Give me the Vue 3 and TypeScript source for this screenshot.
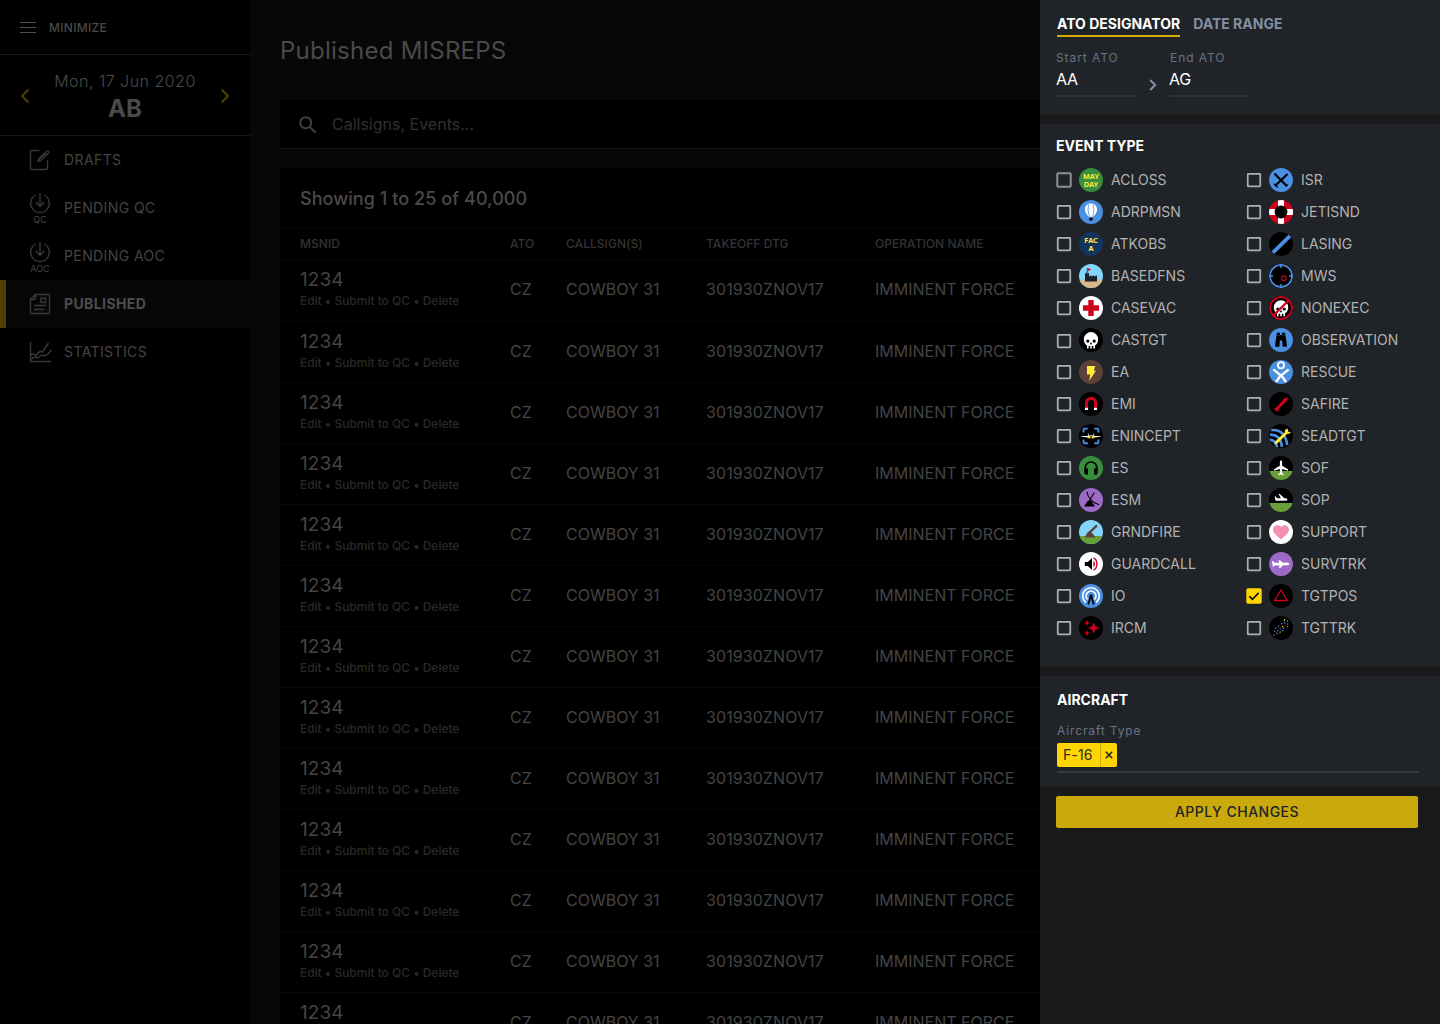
<script setup lang="ts">
interface EventType {
  name: string
  art: string
  bg: string
  checked?: boolean
  kind?: string
}

const skull =
  'M12,2A9,9 0 0,0 3,11C3,14.03 4.53,16.82 7,18.47V22H9V19H11V22H13V19H15V22H17V18.46C19.47,16.81 21,14 21,11A9,9 0 0,0 12,2M8,11A2,2 0 0,1 10,13A2,2 0 0,1 8,15A2,2 0 0,1 6,13A2,2 0 0,1 8,11M16,11A2,2 0 0,1 18,13A2,2 0 0,1 16,15A2,2 0 0,1 14,13A2,2 0 0,1 16,11M12,14L13.5,17H10.5L12,14Z'
const plane =
  'M21,16V14L13,9V3.5A1.5,1.5 0 0,0 11.5,2A1.5,1.5 0 0,0 10,3.5V9L2,14V16L10,13.5V19L8,20.5V22L11.5,21L15,22V20.5L13,19V13.5L21,16Z'
const heart =
  'M12,21.35L10.55,20.03C5.4,15.36 2,12.27 2,8.5C2,5.41 4.42,3 7.5,3C9.24,3 10.91,3.81 12,5.08C13.09,3.81 14.76,3 16.5,3C19.58,3 22,5.41 22,8.5C22,12.27 18.6,15.36 13.45,20.03L12,21.35Z'

const blue = '#4a90e2'
const label = 'font-family="Noto Sans, sans-serif" font-weight="700" font-size="7.3" fill="#ffeb3b" text-anchor="middle"'

const left: EventType[] = [
  { name: 'ACLOSS', bg: '#388e3c', kind: 'large', art: `<text x="12" y="11.100" ${label}>MAY</text><text x="12" y="19" ${label}>DAY</text>` },
  { name: 'ADRPMSN', bg: blue, art: `<path d="M12 3.500c-3.800 0-6.100 2.700-6.100 6 0 3 2 5.200 4 7.200h4.200c2-2 4-4.200 4-7.200 0-3.300-2.300-6-6.100-6z" fill="#fff"/><path d="M10 4.200C8.600 8 9 12.500 10.500 16.500M14 4.200c1.400 3.800 1 8.300-.5 12.300" fill="none" stroke="${blue}" stroke-width=".8"/><path d="M10.200 17.800h3.600v2.200l-.8.8h-2l-.8-.8z" fill="#111"/>` },
  { name: 'ATKOBS', bg: '#12345f', art: `<text x="12" y="11.200" ${label}>FAC</text><text x="12" y="19" ${label}>A</text>` },
  { name: 'BASEDFNS', bg: '#81d4fa', art: `<path d="M0 15.500h24V24H0z" fill="#d7b98a"/><path d="M6 17.500V9l1 .7V8.700h1v1l2-1v3.500h1.300v-.7h1.200v.7h1.400v-.7h1.200v.7h1.400v-.7H18v6z" fill="#1c2126"/><path d="M8.300 9V4" stroke="#1c2126" stroke-width=".8"/><path d="M8.700 4l3.300 1.600-3.300 1.700z" fill="#d0021b"/>` },
  { name: 'CASEVAC', bg: '#fff', art: '<path d="M9.300 4h5.400v5.300H20v5.400h-5.300V20H9.300v-5.300H4V9.300h5.300z" fill="#d0021b"/>' },
  { name: 'CASTGT', bg: '#000', kind: 'low', art: `<path transform="translate(2.400 2.400) scale(.8 .82)" d="${skull}" fill="#fff" fill-rule="evenodd"/>` },
  { name: 'EA', bg: '#5d4037', art: '<path d="M8 6h8.300l-1.500 4.800H17L10.300 20.800l.9-6.300H8z" fill="#ffeb3b"/>' },
  { name: 'EMI', bg: '#000', art: '<path d="M7.500 15.700v-4.900a4.500 4.500 0 0 1 9 0v4.900" fill="none" stroke="#d0021b" stroke-width="3.100"/><path d="M5.950 15.700h3.100V18h-3.100zM14.950 15.700h3.100V18h-3.100z" fill="#fff"/>' },
  { name: 'ENINCEPT', bg: '#000', art: `<path d="M8.800 4.600H5.600q-1 0-1 1v3M15.200 4.600h3.200q1 0 1 1v3M4.600 15.400v2.800q0 1 1 1h3.200M19.400 15.400v2.800q0 1-1 1h-3.200" fill="none" stroke="${blue}" stroke-width="1.900"/><path d="M2.200 12.200l7.300-.5h5l7.300.5v.6l-7.300.7h-5l-7.300-.7zM9 8.500l1 3.500H8.800zM15 8.500l.2 3.500H14z" fill="#fff"/><path d="M10.600 11.200h2.800v3h-2.800z" fill="#ddd"/><path d="M8.500 12.300h2.200v2H8.500zM13.300 12.300h2.200v2h-2.200z" fill="#ffd600"/><path d="M11.300 12h1.400v1.800h-1.400z" fill="#111"/>` },
  { name: 'ES', bg: '#388e3c', art: '<path d="M6.200 15v-3.200a5.800 5.800 0 0 1 11.600 0V15" fill="none" stroke="#000" stroke-width="1.700"/><path d="M5.400 13q0-.8.8-.8h2.700v6.600h-1.700q-1.800 0-1.800-1.800zM18.600 13q0-.8-.8-.8h-2.700v6.600h1.700q1.800 0 1.800-1.800z" fill="#000"/>' },
  { name: 'ESM', bg: '#9b6bc7', art: '<path d="M5 18.500L8.600 13l3.400-.5 4 6z" fill="#000"/><path d="M8 3.700c.6 5.800 5.300 11 12 13.100M15.300 4.500l-5.500 9.200" fill="none" stroke="#000" stroke-width="1.100"/>' },
  { name: 'GRNDFIRE', bg: '#81d4fa', art: '<path d="M0 16h24v8H0z" fill="#689f38"/><path d="M5.500 17.500l3-5 2.500-1.600L14 14l2.500 3.500z" fill="#5d4037"/><path d="M10 13l8-7.700" stroke="#5d4037" stroke-width="2.300"/>' },
  { name: 'GUARDCALL', bg: '#fff', art: '<path d="M5.800 10h3L13 6v12l-4.200-4h-3z" fill="#000"/><path d="M14.400 8.400v7.200q1.600-1.200 1.600-3.600t-1.600-3.600z" fill="#d0021b"/><path d="M14.500 6.200c4.500 1.300 4.500 10.300 0 11.600" fill="none" stroke="#d0021b" stroke-width="1.400"/>' },
  { name: 'IO', bg: blue, art: '<path d="M6.800 18.500a8.300 8.300 0 1 1 10.400 0M8.500 15.500a4.900 4.900 0 1 1 7 0" fill="none" stroke="#fff" stroke-width="1.700"/><circle cx="12" cy="11.800" r="1.600" fill="#000"/><path d="M11.600 12.500L9.200 20.500M12.400 12.500l2.400 8" stroke="#000" stroke-width="1.800"/>' },
  { name: 'IRCM', bg: '#000', art: '<path d="M14.700 6.600l1.600 3.800 3.900 1.600-3.900 1.600-1.600 3.900-1.600-3.900L9.200 12l3.900-1.600zM8 4.200l.8 1.900 1.900.8-1.900.8L8 9.600l-.8-1.900-1.900-.8 1.900-.8zM8 14.400l.8 1.900 1.900.8-1.900.8-.8 1.900-.8-1.900-1.900-.8 1.900-.8z" fill="#d0021b" stroke="#d0021b" stroke-width=".3"/>' },
]

const right: EventType[] = [
  { name: 'ISR', bg: blue, art: '<path d="M6 18L18.500 6M6.300 6.500L18 18.200" stroke="#000" stroke-width="2.100"/><path d="M4.800 15.600l3.900 3.900M5 6.500l2-1.200M17.300 18.500l1.300-2" stroke="#000" stroke-width="1.200"/>' },
  { name: 'JETISND', bg: '#d0021b', art: '<path d="M9 0h6v24H9zM0 9h24v6H0z" fill="#fff"/><circle cx="12" cy="12" r="6.400" fill="#000"/>' },
  { name: 'LASING', bg: '#000', art: `<path d="M3.600 20.800L21.300 3.600" stroke="${blue}" stroke-width="3.800"/>` },
  { name: 'MWS', bg: '#000', art: `<circle cx="12" cy="12" r="11.100" fill="none" stroke="${blue}" stroke-width="1.800"/><path d="M12 0v4M12 20v4M0 12h4M20 12h4" stroke="${blue}" stroke-width="1.500"/><circle cx="14.800" cy="14.200" r="2.300" fill="none" stroke="#d0021b" stroke-width="1.200"/>` },
  { name: 'NONEXEC', bg: '#000', art: `<path transform="translate(2.400 2.600) scale(.8)" d="${skull}" fill="#fff" fill-rule="evenodd"/><circle cx="12" cy="12" r="11" fill="none" stroke="#d0021b" stroke-width="2"/><path d="M4.300 19.700L19.700 4.300" stroke="#d0021b" stroke-width="2.300"/>` },
  { name: 'OBSERVATION', bg: blue, art: '<path d="M8 4.800h3V7h2V4.800h3l.5 2.400 1.300 9.300v2.300h-4.200l-.4-6.300h-2.400l-.4 6.300H6.200v-2.300l1.300-9.300z" fill="#000"/><path d="M7.600 7.300h3.400M13 7.300h3.400" stroke="#4a90e2" stroke-width=".35"/>' },
  { name: 'RESCUE', bg: blue, art: '<circle cx="12" cy="5.200" r="3.100" fill="none" stroke="#fff" stroke-width="1.800"/><path d="M4.300 9.300L12 15.600l7.700-6.300M12 15L7 22M12 15l5 7" fill="none" stroke="#fff" stroke-width="2.300"/>' },
  { name: 'SAFIRE', bg: '#000', art: '<path d="M18.800 5.200q.2 3-1.400 4.600l-1.300.6-6.500 6.500-.1 2.600-1.300-.8-.7.900-.5-1.300-1.300.2.300-1.300-1.300-.4 3-1.900 5.900-6.100.4-1.500q1.700-1.800 4.800-2.100z" fill="#d0021b"/>' },
  { name: 'SEADTGT', bg: '#000', art: `<path d="M2.300 6.100Q16 5 18.200 21M.8 10.800Q11.500 10 13 23M0 15.800q7 0 8 7.500" fill="none" stroke="${blue}" stroke-width="2.600"/><path d="M18.700 4.800l-2.400.9-.4 2.900-9.800 9-.5 2.600 2.900-1 9.300-9.300 2.600-.3 1.500-1.700-2.800.2z" fill="#ffeb3b" stroke="#ffeb3b" stroke-width=".3"/>` },
  { name: 'SOF', bg: '#000', art: `<path d="M0 15h24v9H0z" fill="#689f38"/><path transform="translate(3.500 3) scale(.74)" d="${plane}" fill="#fff"/>` },
  { name: 'SOP', bg: '#000', art: '<path d="M0 15h24v9H0z" fill="#689f38"/><path d="M5.600 8.600h1l1.600 1.700h3.700L9.600 6h1.200l4.500 4.300h1.800q1.300.2 1.300 1.300t-1.300 1.200H7.600q-.9 0-1.200-.9z" fill="#fff"/>' },
  { name: 'SUPPORT', bg: '#fff', art: `<path transform="translate(2.400 3) scale(.8 .77)" d="${heart}" fill="#f48fb1"/>` },
  { name: 'SURVTRK', bg: '#9b6bc7', art: '<path d="M3 9h1.100l1.300 1.700h4.900L9.500 8.200h1.400l3 2.500 4.700-.1q1.500.4 1.700 1.300-.3 1.100-2 1.300h-4.200L11.300 16H9.900l.8-2.600-5.300.1-1.600 1.800-.3-3.300z" fill="#fff"/>' },
  { name: 'TGTPOS', bg: '#000', checked: true, art: '<path d="M12 6l6.300 10.500H5.700z" fill="none" stroke="#d0021b" stroke-width="1.300"/>' },
  { name: 'TGTTRK', bg: '#000', art: `<path d="M14.500 4h1.200v1.200h-1.200zM18 4.500h1.200v1.200H18zM12 7h1.200v1.200H12zM15 6.500h1.200v1.200H15zM9 9.500h1.200v1.200H9zM6 11.500h1.200v1.200H6zM10.500 12h1.200v1.200h-1.200zM14 11.500h1.200v1.200H14zM18 10h1.200v1.200H18zM5 14.500h1.200v1.200H5zM8 14h1.200v1.200H8zM13 14h1.200v1.200H13zM4.500 18.500h1.200v1.200H4.500zM18 7.500h1.200v1.200H18zM7 16.500h1.200v1.200H7z" fill="${blue}"/><path d="M15 3h1.200v1.200H15zM13 10h1.200v1.200H13zM10.500 15.500h1.200v1.200h-1.200z" fill="#ffd600"/><path d="M16 8.500h1.200v1.200H16zM8.500 17.500h1.200v1.200H8.500z" fill="#d0021b"/>` },
]

const columns = [left, right]
const nav = [
  { icon: 'drafts', text: 'DRAFTS' },
  { icon: 'pending', text: 'PENDING QC', tag: 'QC' },
  { icon: 'pending', text: 'PENDING AOC', tag: 'AOC' },
  { icon: 'published', text: 'PUBLISHED', active: true },
  { icon: 'statistics', text: 'STATISTICS' },
]
const rows = Array.from({ length: 13 }, () => ({
  id: '1234',
  ato: 'CZ',
  callsign: 'COWBOY 31',
  dtg: '301930ZNOV17',
  operation: 'IMMINENT FORCE',
}))
</script>

<template>
  <div class="app">
    <aside class="sidebar">
      <div class="minimize">
        <svg width="16" height="12" viewBox="0 0 16 12"><path d="M0 .5h16M0 5.500h16M0 10.500h16" stroke="#4d4d4d" /></svg>
        <span>MINIMIZE</span>
      </div>
      <div class="day">
        <svg width="10" height="16" viewBox="0 0 10 16"><path d="M8.500 1.500L2 8l6.500 6.500" /></svg>
        <div class="day-text">
          <div class="date">Mon, 17 Jun 2020</div>
          <div class="code">AB</div>
        </div>
        <svg width="10" height="16" viewBox="0 0 10 16"><path d="M1.500 1.500L8 8l-6.500 6.500" /></svg>
      </div>
      <nav>
        <div v-for="item in nav" :key="item.text" class="nav-item" :class="{ active: item.active }">
          <div class="nav-icon" :class="item.tag">
            <svg v-if="item.icon === 'drafts'" width="22" height="22" viewBox="0 0 22 22">
              <path d="M10.500 1.500h-8q-1 0-1 1v17q0 1 1 1h15q1 0 1-1V11M9 12.500l.7-2.700 7.800-7.600q1-.7 1.800 0t.1 1.800l-7.700 7.700zM9.500 11l7.500-7" />
            </svg>
            <svg v-else-if="item.icon === 'pending'" class="pending" width="22" height="22" viewBox="0 0 22 22">
              <path d="M6.700 3A9.300 9.300 0 1 0 15.300 3M11 1v13M6.800 10l4.200 4.200 4.200-4.200" />
            </svg>
            <svg v-else-if="item.icon === 'published'" width="22" height="22" viewBox="0 0 22 22">
              <path d="M1.500 6.500l5-5h13q1 0 1 1v17q0 1-1 1h-17q-1 0-1-1zM1.500 6.500h4q1 0 1-1v-4M12 5.200h4.500v4.300H12zM5 12.500h12M5 16.500h10" />
            </svg>
            <svg v-else width="22" height="22" viewBox="0 0 22 22">
              <path d="M1.500 1v19.500H22M2 13.500l2.500-.5 2.500 1.500 3.500-4 3 .5L19.500 2M2 18l4-2 2.500 1 4-3 2.500 1 3.500-1.500 4-4.500" />
            </svg>
            <span v-if="item.tag" class="tag">{{ item.tag }}</span>
          </div>
          <span class="nav-text">{{ item.text }}</span>
        </div>
      </nav>
    </aside>

    <main class="main">
      <h1>Published MISREPS</h1>
      <div class="search">
        <svg width="18" height="18" viewBox="0 0 18 18"><circle cx="6.700" cy="6.700" r="5.500" /><path d="M10.700 10.700l6 6" /></svg>
        <span>Callsigns, Events...</span>
      </div>
      <section class="table">
        <div class="showing">Showing 1 to 25 of 40,000</div>
        <div class="row head">
          <span>MSNID</span><span>ATO</span><span>CALLSIGN(S)</span><span>TAKEOFF DTG</span><span>OPERATION NAME</span>
        </div>
        <div v-for="(r, i) in rows" :key="i" class="row body">
          <div>
            <div class="id">{{ r.id }}</div>
            <div class="links">Edit • Submit to QC • Delete</div>
          </div>
          <span>{{ r.ato }}</span><span>{{ r.callsign }}</span><span class="dtg">{{ r.dtg }}</span><span>{{ r.operation }}</span>
        </div>
      </section>
    </main>

    <aside class="panel">
      <section class="ato">
        <div class="tabs"><span class="on">ATO DESIGNATOR</span><span>DATE RANGE</span></div>
        <div class="range">
          <div class="field"><label>Start ATO</label><div class="value">AA</div></div>
          <svg width="8" height="12" viewBox="0 0 8 12"><path d="M1.200 1l5 5-5 5" fill="none" stroke="#8290a2" stroke-width="2" /></svg>
          <div class="field end"><label>End ATO</label><div class="value">AG</div></div>
        </div>
      </section>
      <section class="events">
        <h2>EVENT TYPE</h2>
        <div class="columns">
          <div v-for="(list, c) in columns" :key="c" class="column">
            <div v-for="e in list" :key="e.name" class="event">
              <svg class="check" :class="e.kind" width="16" height="16" viewBox="0 0 16 16">
                <template v-if="e.checked">
                  <rect x=".3" y=".3" width="15.400" height="15.400" rx="1.800" fill="#ffd600" />
                  <path d="M3.300 8.200l3.100 3.100 6.300-6.400" fill="none" stroke="#111" stroke-width="1.700" />
                </template>
                <rect v-else-if="e.kind === 'large'" x="1.300" y="1.300" width="13.400" height="13.400" rx=".8" fill="none" stroke="#8f8f8f" stroke-width="2" />
                <rect v-else x="1.750" y="1.750" width="12.500" height="12.500" rx=".6" fill="none" stroke="#a9b0ba" stroke-width="1.750" />
              </svg>
              <svg class="badge" width="24" height="24" viewBox="0 0 24 24" :style="{ background: e.bg }" v-html="e.art" />
              <span class="name">{{ e.name }}</span>
            </div>
          </div>
        </div>
      </section>
      <section class="aircraft">
        <h2>AIRCRAFT</h2>
        <label>Aircraft Type</label>
        <div class="chips">
          <div class="chip">
            <span>F-16</span>
            <i><svg width="8" height="8" viewBox="0 0 8 8"><path d="M.8.8l6.400 6.400M7.200.8L.8 7.200" stroke="#1f2228" stroke-width="1.500" /></svg></i>
          </div>
        </div>
      </section>
      <button>APPLY CHANGES</button>
    </aside>
  </div>
</template>

<style>
body { background: #000; }
</style>

<style scoped>
* { box-sizing: border-box; }
.app {
  display: flex;
  width: 1440px;
  height: 1024px;
  overflow: hidden;
  background: #070707;
  color: #4a4a4a;
  font-family: Inter, "Liberation Sans", sans-serif;
}
svg { display: block; flex: none; }
h1, h2 { margin: 0; }
.sidebar { width: 250px; flex: none; background: #000; }
.minimize {
  display: flex;
  align-items: center;
  gap: 13px;
  height: 55px;
  padding-left: 20px;
  border-bottom: 1px solid #1a1a1a;
  font-size: 12px;
  font-weight: 500;
  letter-spacing: .3px;
}
.minimize svg { margin-top: 2px; }
.day {
  display: flex;
  align-items: center;
  justify-content: space-between;
  height: 81px;
  padding: 0 20px;
  border-bottom: 1px solid #1a1a1a;
}
.day svg { margin-top: 1px; fill: none; stroke: #4d4000; stroke-width: 2; }
.day-text { padding-top: 3px; text-align: center; }
.date { font-size: 16px; line-height: 24px; font-weight: 300; letter-spacing: .48px; }
.code { font-size: 24px; line-height: 31px; font-weight: 700; }
.nav-item {
  display: flex;
  align-items: center;
  gap: 13px;
  height: 48px;
  padding-left: 29px;
  font-size: 14px;
  letter-spacing: .4px;
  color: #444;
}
.nav-item.active {
  padding-left: 23px;
  border-left: 6px solid #4d4000;
  background: #070707;
  color: #4d4d4d;
  font-weight: 700;
}
.nav-text { padding-bottom: 2px; }
.active .nav-text { padding-bottom: 1px; }
.nav-icon { display: flex; flex-direction: column; align-items: center; width: 22px; }
.nav-icon.AOC { padding-top: 2px; }
.nav-icon svg { overflow: visible; fill: none; stroke: #383838; stroke-width: 1.400; }
.nav-icon svg.pending { margin-top: 1px; }
.tag { font-size: 9px; line-height: 11px; letter-spacing: 0; }
.main { width: 790px; flex: none; padding: 36px 0 0 30px; }
h1 { height: 64px; font-size: 24px; line-height: 30px; font-weight: 400; letter-spacing: .25px; }
.search {
  display: flex;
  align-items: center;
  gap: 15px;
  height: 49px;
  padding-left: 19px;
  border-bottom: 1px solid #151515;
  background: #000;
  font-size: 16px;
  color: #303030;
}
.search svg { margin-top: 2px; fill: none; stroke: #404040; stroke-width: 2; }
.table { height: 875px; margin-top: 19px; background: #000; }
.showing { height: 61px; padding-left: 20px; border-bottom: 1px solid #090909; font-size: 18px; line-height: 61px; font-weight: 500; letter-spacing: .07px; }
.row {
  display: grid;
  grid-template-columns: 210px 56px 140px 169px 1fr;
  align-items: center;
  padding-left: 20px;
  border-bottom: 1px solid #090909;
  white-space: nowrap;
}
.head { height: 31px; padding-bottom: 2px; font-size: 12px; font-weight: 500; letter-spacing: .05px; color: #333; }
.body { height: 61px; padding-bottom: 3px; font-size: 16px; color: #444; }
.head + .body { height: 62px; padding-bottom: 4px; }
.dtg { letter-spacing: .08px; }
.id { font-size: 19px; line-height: 24px; letter-spacing: .1px; }
.links { font-size: 12px; line-height: 18px; font-weight: 500; letter-spacing: -.02px; color: #292929; }
.panel { width: 400px; flex: none; background: #1a1a1a; }
.panel section { background: #202328; }
.ato { height: 114px; padding: 14px 16px 0; }
.tabs { display: flex; gap: 13px; padding-left: 1px; font-size: 14px; line-height: 20px; font-weight: 700; color: #8290a2; }
.tabs span { height: 23px; }
.tabs .on { border-bottom: 2px solid #d4ab00; color: #fff; }
.range { display: flex; align-items: flex-start; padding-top: 11px; }
.range > svg { margin: 31px 12px 0 13px; }
.field { width: 80px; }
.end label { padding-left: 1px; }
label { display: block; font-size: 12px; line-height: 20px; letter-spacing: .92px; color: #687383; }
.value { height: 29px; border-bottom: 2px solid #2e3136; color: #fff; font-size: 16px; line-height: 22px; letter-spacing: -.3px; }
h2 { font-size: 14px; line-height: 20px; font-weight: 700; color: #fff; }
.events { height: 542px; margin-top: 10px; padding: 12px 16px; }
.columns { display: flex; padding-top: 8px; }
.column { width: 190px; flex: none; }
.event { display: flex; align-items: center; height: 32px; }
.low { margin-top: 2px; }
.badge { margin: 0 8px 0 7px; border-radius: 50%; }
.name { padding-bottom: 1px; font-size: 14px; letter-spacing: 0; color: #b2b2b2; }
.aircraft { height: 110px; margin-top: 10px; padding: 14px 17px; }
.aircraft label { margin-top: 11px; letter-spacing: .87px; }
.chips { width: 362px; height: 32px; padding-top: 2px; border-bottom: 2px solid #36393e; }
.chip { display: flex; width: 60px; height: 24px; border-radius: 2px; background: #ffd600; color: #2b2b20; font-size: 14px; line-height: 24px; letter-spacing: .1px; }
.chip span { width: 44px; padding-left: 6px; border-right: 1px solid #c9a90c; }
.chip i { display: flex; align-items: center; justify-content: center; width: 15px; }
button {
  display: block;
  width: 362px;
  height: 32px;
  margin: 10px 16px;
  padding: 0 0 1px;
  border: 0;
  border-radius: 2px;
  background: #c9a90c;
  color: #202328;
  font: 500 14px Inter, sans-serif;
  letter-spacing: .5px;
}
</style>
